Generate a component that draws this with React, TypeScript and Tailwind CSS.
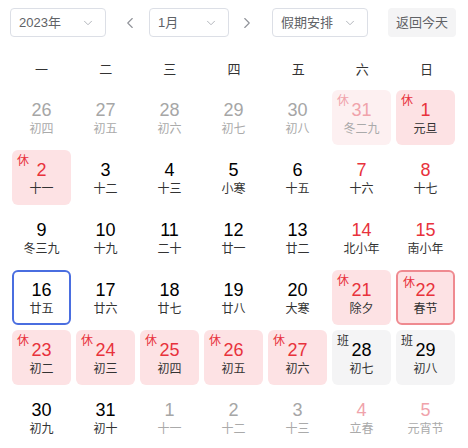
import { ChevronDown, ChevronLeft, ChevronRight } from "lucide-react";

type Kind = "normal" | "weekend" | "rest" | "work";

interface Day {
  n: number;
  lunar: string;
  kind?: Kind;
  out?: boolean;
  selected?: boolean;
  today?: boolean;
}

const weekdays = ["一", "二", "三", "四", "五", "六", "日"];

const days: Day[] = [
  { n: 26, lunar: "初四", out: true },
  { n: 27, lunar: "初五", out: true },
  { n: 28, lunar: "初六", out: true },
  { n: 29, lunar: "初七", out: true },
  { n: 30, lunar: "初八", out: true },
  { n: 31, lunar: "冬二九", out: true, kind: "rest" },
  { n: 1, lunar: "元旦", kind: "rest" },
  { n: 2, lunar: "十一", kind: "rest" },
  { n: 3, lunar: "十二" },
  { n: 4, lunar: "十三" },
  { n: 5, lunar: "小寒" },
  { n: 6, lunar: "十五" },
  { n: 7, lunar: "十六", kind: "weekend" },
  { n: 8, lunar: "十七", kind: "weekend" },
  { n: 9, lunar: "冬三九" },
  { n: 10, lunar: "十九" },
  { n: 11, lunar: "二十" },
  { n: 12, lunar: "廿一" },
  { n: 13, lunar: "廿二" },
  { n: 14, lunar: "北小年", kind: "weekend" },
  { n: 15, lunar: "南小年", kind: "weekend" },
  { n: 16, lunar: "廿五", selected: true },
  { n: 17, lunar: "廿六" },
  { n: 18, lunar: "廿七" },
  { n: 19, lunar: "廿八" },
  { n: 20, lunar: "大寒" },
  { n: 21, lunar: "除夕", kind: "rest" },
  { n: 22, lunar: "春节", kind: "rest", today: true },
  { n: 23, lunar: "初二", kind: "rest" },
  { n: 24, lunar: "初三", kind: "rest" },
  { n: 25, lunar: "初四", kind: "rest" },
  { n: 26, lunar: "初五", kind: "rest" },
  { n: 27, lunar: "初六", kind: "rest" },
  { n: 28, lunar: "初七", kind: "work" },
  { n: 29, lunar: "初八", kind: "work" },
  { n: 30, lunar: "初九" },
  { n: 31, lunar: "初十" },
  { n: 1, lunar: "十一", out: true },
  { n: 2, lunar: "十二", out: true },
  { n: 3, lunar: "十三", out: true },
  { n: 4, lunar: "立春", out: true, kind: "weekend" },
  { n: 5, lunar: "元宵节", out: true, kind: "weekend" },
];

function Select({ label, width }: { label: string; width: string }) {
  return (
    <div className={`flex h-[29px] items-center justify-between rounded border border-[#dcdfe6] bg-white pl-2 pr-[10px] text-[13px] text-[#606266] ${width}`}>
      <span>{label}</span>
      <ChevronDown size={14} strokeWidth={1.5} className="text-[#a8abb2]" />
    </div>
  );
}

function Cell({ d }: { d: Day }) {
  const kind = d.kind ?? "normal";
  let bg = "";
  let num = "text-black";
  let lunar = "text-[#333]";
  if (kind === "rest") {
    bg = d.out ? "bg-[#fdf0f1]" : "bg-[#fde2e4]";
    num = d.out ? "text-[#f0a3ab]" : "text-[#e8323c]";
    lunar = d.out ? "text-[#aaa]" : "text-[#333]";
  } else if (kind === "work") {
    bg = "bg-[#f4f4f5]";
  } else if (kind === "weekend") {
    num = d.out ? "text-[#f0a3ab]" : "text-[#e8323c]";
    lunar = d.out ? "text-[#aaa]" : "text-[#333]";
  } else if (d.out) {
    num = "text-[#a6a6a6]";
    lunar = "text-[#aaa]";
  }
  const border = d.selected
    ? "border-2 border-[#4a6ee0]"
    : d.today
      ? "border-2 border-[#ef8a90]"
      : "";
  const badge = kind === "rest" ? "休" : kind === "work" ? "班" : "";
  const badgeColor = kind === "work" ? "text-[#333]" : d.out ? "text-[#f0a3ab]" : "text-[#e8323c]";

  return (
    <div className={`relative flex h-[55px] flex-col items-center justify-center rounded-[6px] ${bg} ${border}`}>
      {badge && (
        <span className={`absolute left-[5px] top-[4px] text-[12px] leading-[14px] ${badgeColor}`}>{badge}</span>
      )}
      <span className={`text-[18px] leading-[22px] ${num}`}>{d.n}</span>
      <span className={`text-[12px] leading-[16px] ${lunar}`}>{d.lunar}</span>
    </div>
  );
}

export default function App() {
  return (
    <div
      className="w-[468px] h-[448px] bg-white overflow-hidden"
      style={{ fontFamily: '"Liberation Sans", "Noto Sans CJK SC", sans-serif' }}
    >
      <div className="flex items-center pl-[10px] pt-2">
        <Select label="2023年" width="w-[96px]" />
        <ChevronLeft size={18} strokeWidth={1.5} className="ml-[15px] text-[#909399]" />
        <div className="ml-[10px]">
          <Select label="1月" width="w-[80px]" />
        </div>
        <ChevronRight size={18} strokeWidth={1.5} className="ml-[9px] text-[#909399]" />
        <div className="ml-[16px]">
          <Select label="假期安排" width="w-[96px]" />
        </div>
        <button className="ml-[20px] h-[29px] w-[68px] rounded bg-[#f4f4f5] text-[13px] text-[#606266]">
          返回今天
        </button>
      </div>

      <div className="px-3">
        <div className="mt-[20px] grid grid-cols-7 gap-x-[5px]">
          {weekdays.map((w) => (
            <div key={w} className="h-[25px] text-center text-[13px] leading-[25px] text-[#333]">
              {w}
            </div>
          ))}
        </div>
        <div className="mt-[8px] grid w-[443px] grid-cols-7 gap-[5px]">
          {days.map((d, i) => (
            <Cell key={i} d={d} />
          ))}
        </div>
      </div>
    </div>
  );
}
